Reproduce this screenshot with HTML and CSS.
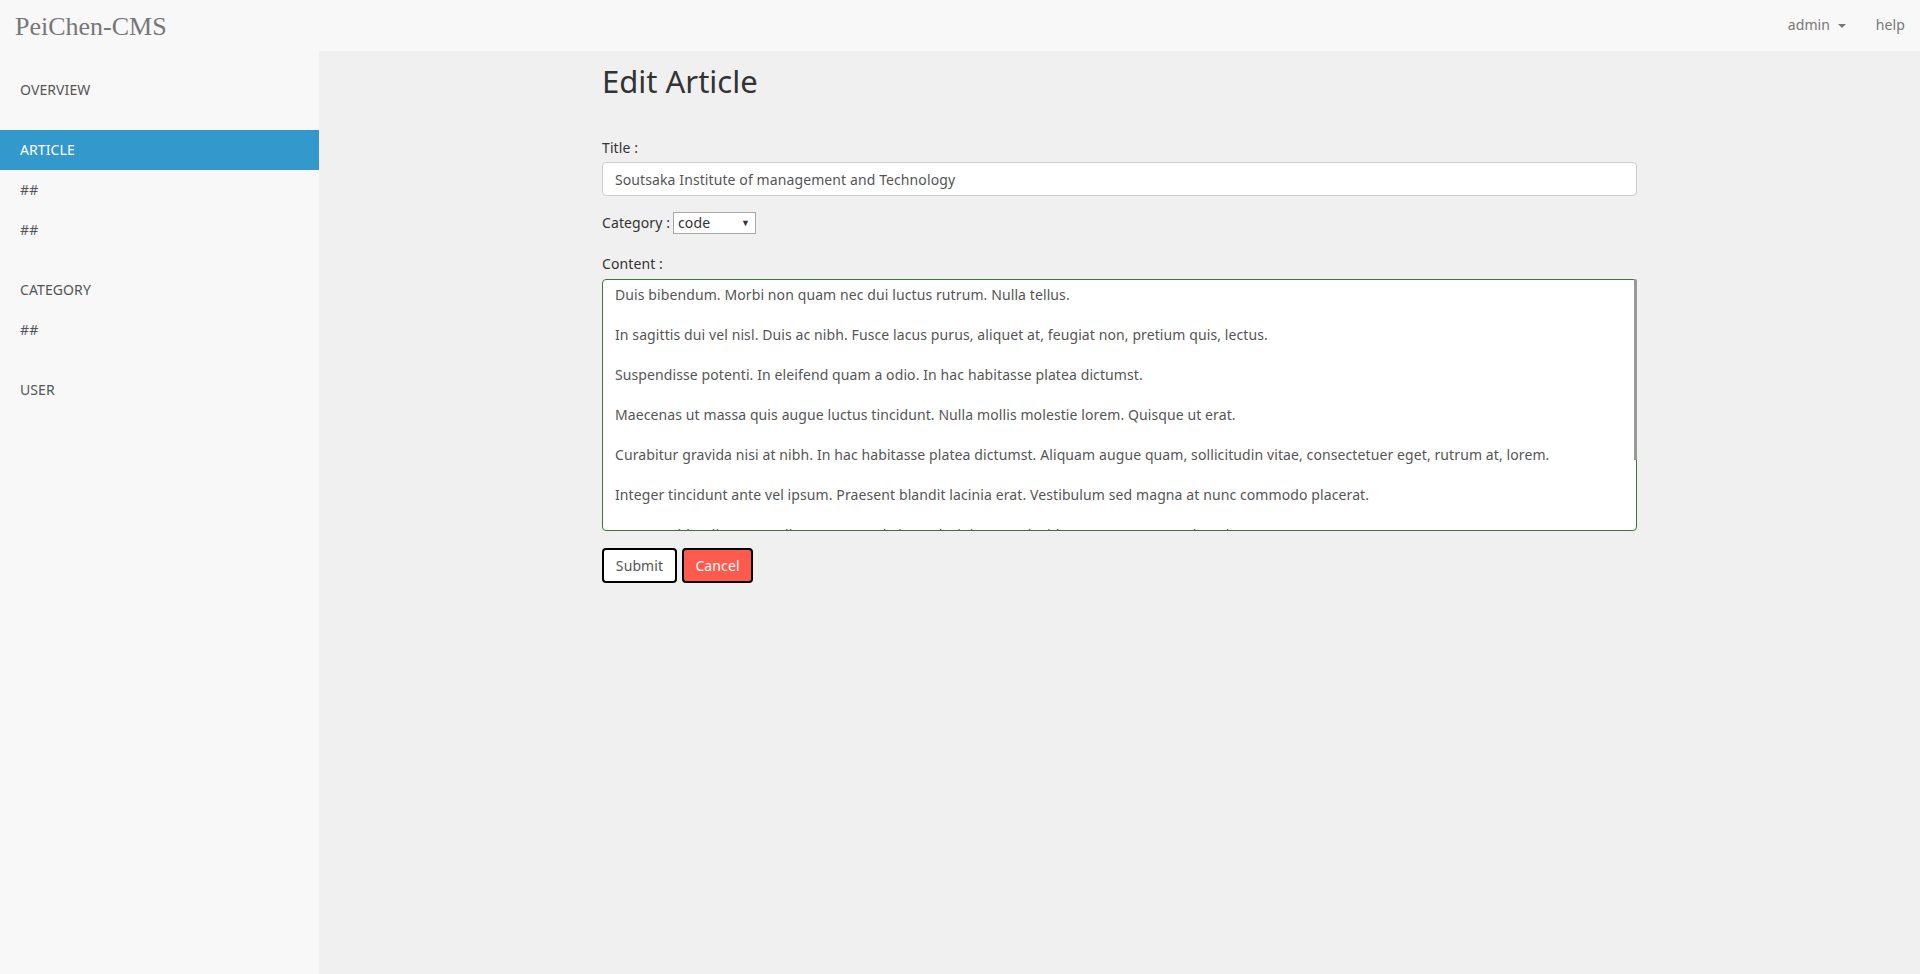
FILE: index.html
```html
<!DOCTYPE html>
<html lang="en">
<head>
<meta charset="utf-8">
<title>PeiChen-CMS</title>
<link rel="stylesheet" href="styles.css">
</head>
<body>
<header class="navbar">
  <a class="brand" href="#">PeiChen-CMS</a>
  <ul class="nav-right">
    <li><a href="#">admin <span class="caret"></span></a></li>
    <li><a href="#">help</a></li>
  </ul>
</header>
<div class="layout">
  <aside class="sidebar">
    <ul class="nav-group">
      <li><a href="#">OVERVIEW</a></li>
    </ul>
    <ul class="nav-group">
      <li class="active"><a href="#">ARTICLE</a></li>
      <li><a href="#">##</a></li>
      <li><a href="#">##</a></li>
    </ul>
    <ul class="nav-group">
      <li><a href="#">CATEGORY</a></li>
      <li><a href="#">##</a></li>
    </ul>
    <ul class="nav-group">
      <li><a href="#">USER</a></li>
    </ul>
  </aside>
  <main class="main">
    <div class="panel">
      <h1 class="page-title">Edit Article</h1>
      <form class="edit-form">
        <label class="field-label" for="title">Title :</label>
        <input class="text-input" id="title" type="text" value="Soutsaka Institute of management and Technology">
        <div class="category-row">
          <label class="inline-label" for="category">Category :</label>
          <span class="select-wrap">
            <select class="select" id="category">
              <option>code</option>
              <option>life</option>
            </select>
            <span class="select-arrow">▼</span>
          </span>
        </div>
        <label class="field-label content-label" for="content">Content :</label>
        <div class="area-wrap">
          <textarea class="content-area" id="content">Duis bibendum. Morbi non quam nec dui luctus rutrum. Nulla tellus.

In sagittis dui vel nisl. Duis ac nibh. Fusce lacus purus, aliquet at, feugiat non, pretium quis, lectus.

Suspendisse potenti. In eleifend quam a odio. In hac habitasse platea dictumst.

Maecenas ut massa quis augue luctus tincidunt. Nulla mollis molestie lorem. Quisque ut erat.

Curabitur gravida nisi at nibh. In hac habitasse platea dictumst. Aliquam augue quam, sollicitudin vitae, consectetuer eget, rutrum at, lorem.

Integer tincidunt ante vel ipsum. Praesent blandit lacinia erat. Vestibulum sed magna at nunc commodo placerat.

Praesent blandit. Nam nulla. Integer pede justo, lacinia eget, tincidunt eget, tempus vel, pede.

Morbi porttitor lorem id ligula. Suspendisse ornare consequat lectus.

In est risus, auctor sed, tristique in, tempus sit amet, sem.</textarea>
          <span class="scroll-thumb"></span>
        </div>
        <div class="actions">
          <button type="submit" class="btn btn-submit">Submit</button>
          <button type="button" class="btn btn-cancel">Cancel</button>
        </div>
      </form>
    </div>
  </main>
</div>
</body>
</html>
```
FILE: styles.css
```css
* { box-sizing: border-box; }
html, body { height: 100%; }
body {
  margin: 0;
  font-family: "Noto Sans", "Open Sans", sans-serif;
  font-size: 14px;
  line-height: 20px;
  letter-spacing: 0.1px;
  color: #333;
  background: #f0f0f0;
}
a { text-decoration: none; }
ul { list-style: none; margin: 0; padding: 0; }

.navbar {
  height: 51px;
  background: #f8f8f8;
  display: flex;
  align-items: center;
  justify-content: space-between;
}
.brand {
  font-family: "Liberation Serif", serif;
  font-size: 26px;
  letter-spacing: 0;
  color: #777;
  padding-left: 15px;
  line-height: 30px;
  margin-top: 2px;
}
.nav-right {
  display: flex;
  padding-right: 15px;
}
.nav-right li a {
  display: block;
  color: #777;
  padding: 0 0 0 30px;
  line-height: 20px;
  margin-top: -2px;
}
.caret {
  display: inline-block;
  width: 0;
  height: 0;
  margin-left: 4px;
  vertical-align: middle;
  border-top: 4px solid #777;
  border-left: 4px solid transparent;
  border-right: 4px solid transparent;
}

.layout {
  display: flex;
  min-height: calc(100% - 51px);
}
.sidebar {
  width: 319px;
  flex: none;
  background: #f8f8f8;
  padding-top: 19px;
}
.nav-group { margin-bottom: 20px; }
.nav-group li a {
  display: block;
  padding: 10px 20px;
  line-height: 20px;
  color: #555;
}
.nav-group li.active a {
  background: #3399cc;
  color: #fff;
}

.main {
  flex: 1;
  display: flex;
  justify-content: center;
}
.panel {
  width: 1035px;
}
.page-title {
  font-size: 31px;
  font-weight: 400;
  line-height: 36px;
  letter-spacing: 0;
  color: #333;
  margin: 12px 0 39px;
}
.field-label {
  display: block;
  margin-bottom: 4px;
  color: #333;
}
.text-input {
  display: block;
  width: 100%;
  height: 34px;
  padding: 6px 12px;
  font: inherit;
  letter-spacing: inherit;
  color: #555;
  background: #fff;
  border: 1px solid #ccc;
  border-radius: 4px;
}
.category-row {
  display: flex;
  align-items: center;
  margin: 16px 0 20px;
}
.inline-label { margin-right: 3px; }
.select-wrap {
  position: relative;
  display: inline-block;
}
.select {
  -webkit-appearance: none;
  appearance: none;
  display: block;
  width: 83px;
  height: 22px;
  padding: 0 0 0 4px;
  font: inherit;
  letter-spacing: inherit;
  line-height: 20px;
  color: #333;
  background: #fff;
  border: 1px solid #a9a9a9;
  border-radius: 0;
}
.select-arrow {
  position: absolute;
  right: 6px;
  top: 5px;
  font-size: 9px;
  line-height: 12px;
  color: #333;
  pointer-events: none;
}
.content-label { margin-bottom: 5px; }
.area-wrap {
  position: relative;
}
.content-area {
  display: block;
  width: 100%;
  height: 252px;
  padding: 5px 12px 6px;
  font: inherit;
  letter-spacing: inherit;
  line-height: 20px;
  color: #555;
  background: #fff;
  border: 1px solid #3c763d;
  border-radius: 4px;
  resize: none;
  overflow: hidden;
}
.scroll-thumb {
  position: absolute;
  top: 0;
  right: 0;
  width: 3px;
  height: 181px;
  background: #999;
  border-top-right-radius: 2px;
}

.actions {
  display: flex;
  gap: 5px;
  margin-top: 17px;
}
.btn {
  height: 35px;
  padding: 0 11px;
  font: inherit;
  letter-spacing: inherit;
  border: 2px solid #000;
  border-radius: 4px;
  cursor: pointer;
}
.btn-submit {
  width: 75px;
  background: #fff;
  color: #555;
}
.btn-cancel {
  width: 71px;
  background: #ff5a4e;
  color: #fff;
}
```
